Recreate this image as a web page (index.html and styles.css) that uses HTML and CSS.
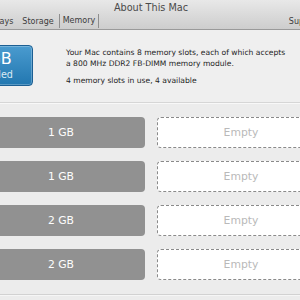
FILE: index.html
```html
<!DOCTYPE html>
<html lang="en">
<head>
    <meta charset="UTF-8">
    <title>About This Mac</title>
    <link rel="stylesheet" href="styles.css">
</head>
<body>
    <div class="window">
        <header class="titlebar">
            <div class="title">About This Mac</div>
            <nav class="tabs">
                <span class="tab">Overview</span>
                <span class="tab">Displays</span>
                <span class="tab">Storage</span>
                <span class="tab active">Memory</span>
                <span class="spacer"></span>
                <span class="tab">Support</span>
                <span class="tab">Service</span>
            </nav>
        </header>

        <section class="summary">
            <div class="total">
                <div class="total-size">6 GB</div>
                <div class="total-label">Installed</div>
            </div>
            <div class="info">
                <p>Your Mac contains 8 memory slots, each of which accepts<br>a 800 MHz DDR2 FB-DIMM memory module.</p>
                <p>4 memory slots in use, 4 available</p>
            </div>
        </section>

        <section class="slots">
            <div class="slot used">1 GB</div>
            <div class="slot empty">Empty</div>
            <div class="slot used">1 GB</div>
            <div class="slot empty">Empty</div>
            <div class="slot used">2 GB</div>
            <div class="slot empty">Empty</div>
            <div class="slot used">2 GB</div>
            <div class="slot empty">Empty</div>
        </section>
    </div>
</body>
</html>
```

FILE: styles.css
```css
body, html {
    margin: 0;
    height: 100%;
    overflow: hidden;
    font-family: 'DejaVu Sans', 'Liberation Sans', sans-serif;
    background: #ececec;
}
.window {
    width: 438px;
    margin-left: -68px;
    background: #ececec;
}
.titlebar {
    height: 29px;
    background: linear-gradient(#e8e8e8, #cdcdcd);
    border-bottom: 1px solid #9a9a9a;
}
.title {
    text-align: center;
    font-size: 9.7px;
    line-height: 12px;
    color: #4a4a4a;
    padding-top: 2px;
}
.tabs {
    display: flex;
    align-items: center;
    gap: 9px;
    padding-left: 1px;
    padding-right: 11px;
    margin-top: 0;
    height: 14px;
    font-size: 8px;
    color: #3c3c3c;
}
.tab {
    white-space: nowrap;
}
.tab.active {
    padding: 0 3px;
    margin: 0 -4px;
    height: 14px;
    line-height: 14px;
    border-left: 1px solid #8e8e8e;
    border-right: 1px solid #8e8e8e;
}
.spacer {
    flex: 1;
}
.summary {
    display: flex;
    align-items: flex-start;
    padding: 15px 20px 16px;
    background: #efefef;
    border-bottom: 1px solid #d6d6d6;
    box-shadow: 0 1px 0 #f8f8f8;
}
.total {
    width: 79px;
    height: 39px;
    border: 1px solid #1c5f93;
    border-radius: 4px;
    background: linear-gradient(#4a9bcf, #2277b0);
    box-shadow: inset 0 0 0 1px rgba(255, 255, 255, 0.25);
    color: white;
    text-align: center;
}
.total-size {
    font-size: 16px;
    line-height: 18px;
    margin-top: 4px;
}
.total-label {
    font-size: 9.6px;
    line-height: 12px;
    margin-top: 1px;
    color: #dbe9f4;
}
.info {
    margin-left: 33px;
    font-size: 7.6px;
    line-height: 11px;
    color: #1e1e1e;
}
.info p {
    margin: 2px 0 6px;
}
.info p:last-child {
    margin-bottom: 0;
}
.slots {
    display: grid;
    grid-template-columns: 168px 168px;
    column-gap: 12px;
    row-gap: 13px;
    padding: 14px 45px 14px;
    border-bottom: 1px solid #d2d2d2;
    box-shadow: 0 1px 0 #f6f6f6;
}
.slot {
    height: 31px;
    box-sizing: border-box;
    border-radius: 4px;
    display: flex;
    align-items: center;
    justify-content: center;
    font-size: 10.8px;
}
.slot.used {
    background: #919191;
    color: #fdfdfd;
}
.slot.empty {
    background: #ffffff;
    border: 1px dashed #8a8a8a;
    color: #b9b9b9;
}
```
